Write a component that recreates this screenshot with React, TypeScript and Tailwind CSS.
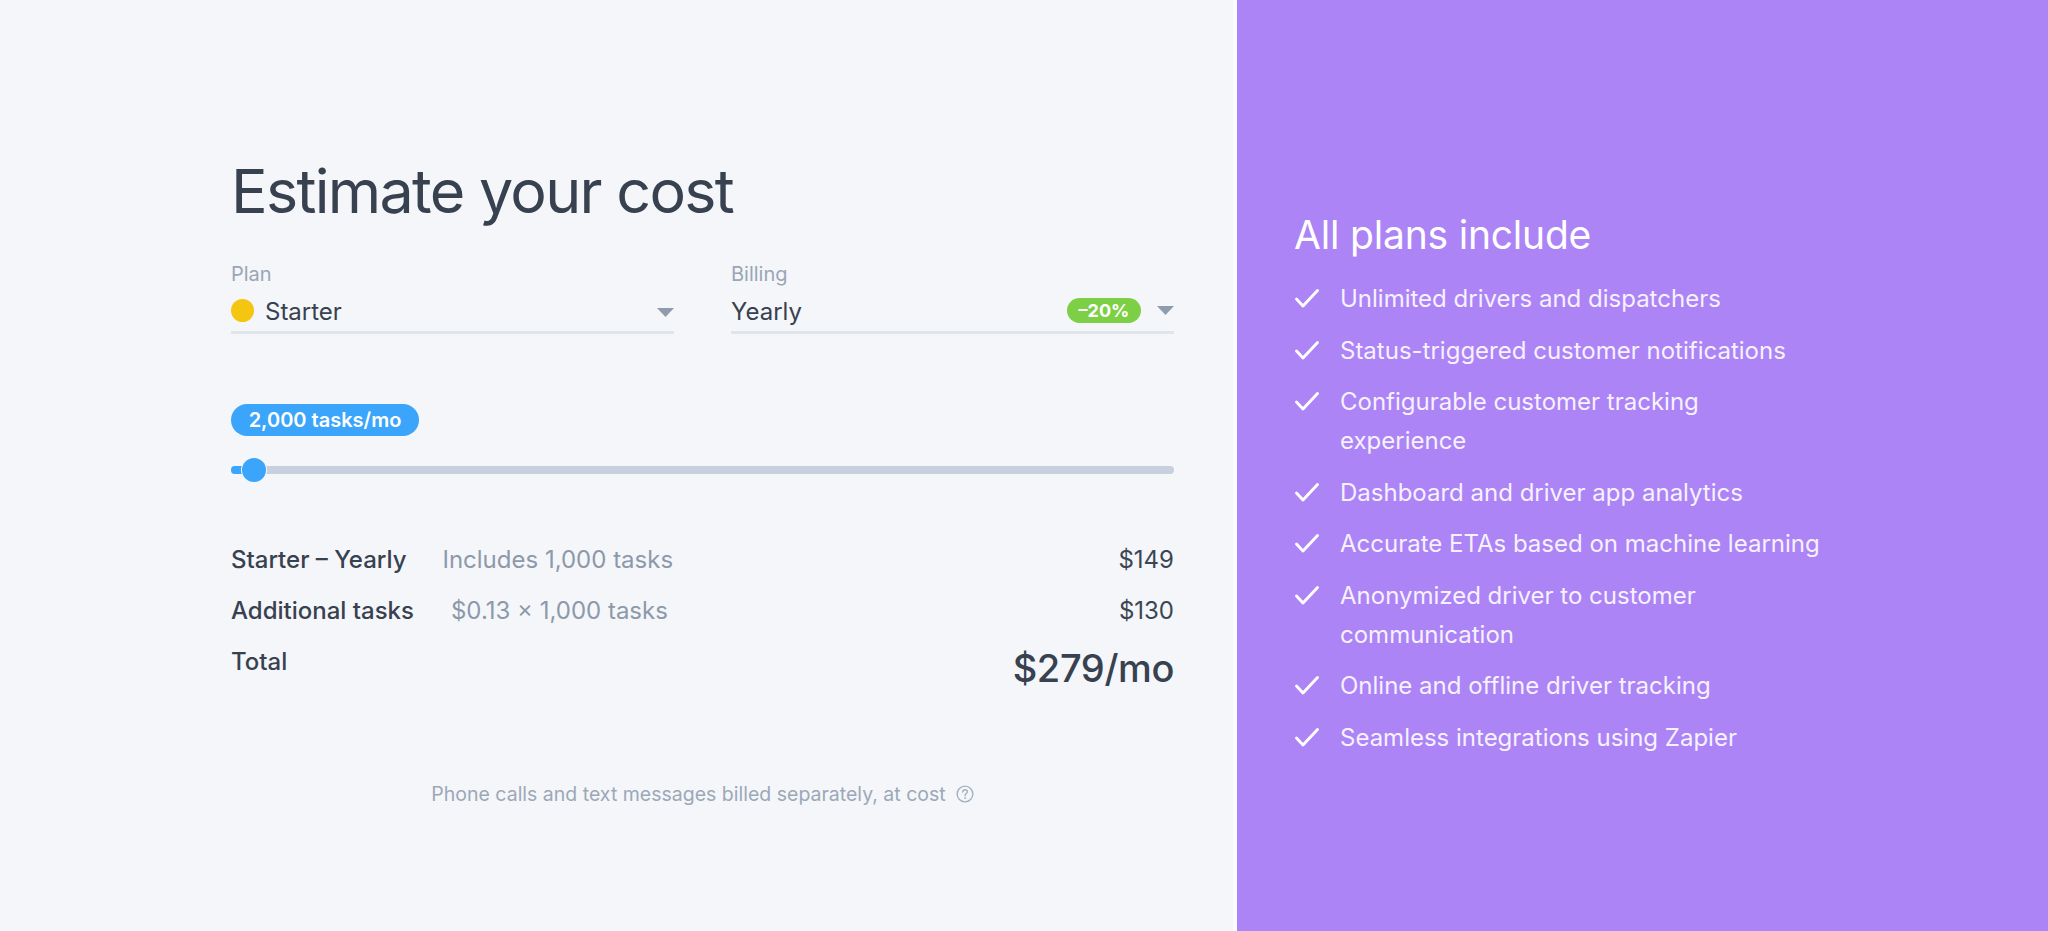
import React from "react";

const features: string[][] = [
  ["Unlimited drivers and dispatchers"],
  ["Status-triggered customer notifications"],
  ["Configurable customer tracking", "experience"],
  ["Dashboard and driver app analytics"],
  ["Accurate ETAs based on machine learning"],
  ["Anonymized driver to customer", "communication"],
  ["Online and offline driver tracking"],
  ["Seamless integrations using Zapier"],
];

function Caret() {
  return (
    <svg width="17" height="9" viewBox="0 0 17 9" className="shrink-0">
      <path d="M0 0 H17 L8.5 9 Z" fill="#8f9cae" />
    </svg>
  );
}

function Check() {
  return (
    <svg width="26" height="21" viewBox="0 0 26 21" className="shrink-0">
      <polyline
        points="2.5,11 9,18 23.5,2.5"
        fill="none"
        stroke="#ffffff"
        strokeWidth="2.9"
        strokeLinecap="round"
        strokeLinejoin="round"
      />
    </svg>
  );
}

function QuestionIcon() {
  return (
    <svg width="18" height="18" viewBox="0 0 16 16" className="shrink-0">
      <circle cx="8" cy="8" r="7" fill="none" stroke="#a3afbf" strokeWidth="1.2" />
      <path
        d="M5.9 6.2 C5.9 4.9 6.9 4.2 8 4.2 C9.2 4.2 10.1 5 10.1 6.1 C10.1 7.4 8.4 7.6 8.1 9 L8.1 9.6"
        fill="none"
        stroke="#a3afbf"
        strokeWidth="1.2"
        strokeLinecap="round"
      />
      <circle cx="8.1" cy="11.7" r="0.8" fill="#a3afbf" />
    </svg>
  );
}

export default function App() {
  return (
    <div
      className="flex h-[931px] w-[2048px] overflow-hidden"
      style={{ fontFamily: "Inter, 'Noto Sans', sans-serif" }}
    >
      {/* Left panel */}
      <div className="w-[1237px] shrink-0 bg-[#f4f6f9] border-r-[4px] border-[#fafbfc] pl-[231px] pt-[161px]">
        <div className="w-[943px] flex flex-col">
          <h1 className="text-[61px] leading-[60px] tracking-[-0.028em] font-normal text-[#37414f]">
            Estimate your cost
          </h1>

          <div className="mt-[41px] flex gap-[57px]">
            {/* Plan */}
            <div className="flex-1 flex flex-col">
              <div className="text-[20px] leading-[24px] text-[#9aa6b6]">Plan</div>
              <div className="mt-[10px] h-[32px] flex items-center">
                <span className="w-[23px] h-[23px] rounded-full bg-[#f5c60f] shrink-0 -mt-[4px]" />
                <span className="ml-[11px] text-[24px] text-[#37414f]">Starter</span>
                <span className="flex-1" />
                <Caret />
              </div>
              <div className="mt-[3px] h-[3px] bg-[#e0e5ec]" />
            </div>
            {/* Billing */}
            <div className="flex-1 flex flex-col">
              <div className="text-[20px] leading-[24px] text-[#9aa6b6]">Billing</div>
              <div className="mt-[10px] h-[32px] flex items-center">
                <span className="text-[24px] text-[#37414f]">Yearly</span>
                <span className="flex-1" />
                <span className="-mt-[3px] w-[74px] h-[25px] rounded-full bg-[#7dcf45] text-white text-[18px] font-bold flex items-center justify-center">
                  –20%
                </span>
                <span className="ml-[16px] -mt-[3px] flex">
                  <Caret />
                </span>
              </div>
              <div className="mt-[3px] h-[3px] bg-[#e0e5ec]" />
            </div>
          </div>

          {/* Slider */}
          <div className="mt-[70px] w-[188px] h-[32px] rounded-full bg-[#3ba4fb] text-white text-[20px] font-semibold flex items-center justify-center">
            2,000 tasks/mo
          </div>
          <div className="mt-[22px] relative h-[24px]">
            <div className="absolute left-0 right-0 top-[8px] h-[8px] rounded-full bg-[#c7d0dd]" />
            <div className="absolute left-0 w-[20px] top-[8px] h-[8px] rounded-full bg-[#3ba4fb]" />
            <div className="absolute left-[10px] top-0 w-[26px] h-[24px] rounded-full bg-[#f4f6f9]" />
            <div className="absolute left-[11px] top-0 w-[24px] h-[24px] rounded-full bg-[#3ba4fb]" />
          </div>

          {/* Breakdown */}
          <div className="mt-[62px] flex flex-col gap-[19px]">
            <div className="flex items-center justify-between h-[32px]">
              <div className="flex items-center">
                <span className="text-[24px] font-medium text-[#37414f]">Starter – Yearly</span>
                <span className="ml-[36px] text-[24px] text-[#8d99aa]">Includes 1,000 tasks</span>
              </div>
              <span className="text-[24px] text-[#3b4554]">$149</span>
            </div>
            <div className="flex items-center justify-between h-[32px]">
              <div className="flex items-center">
                <span className="text-[24px] font-medium text-[#37414f]">Additional tasks</span>
                <span className="ml-[37px] text-[24px] text-[#8d99aa]">$0.13 × 1,000 tasks</span>
              </div>
              <span className="text-[24px] text-[#3b4554]">$130</span>
            </div>
            <div className="flex items-start justify-between">
              <span className="text-[24px] leading-[32px] font-medium text-[#37414f]">Total</span>
              <span className="text-[38px] leading-[44px] font-medium text-[#37414f] tracking-[-0.01em]">
                $279/mo
              </span>
            </div>
          </div>

          <div className="mt-[92px] flex items-center justify-center gap-[10px]">
            <span className="text-[19.5px] leading-[24px] text-[#9ca8b8]">
              Phone calls and text messages billed separately, at cost
            </span>
            <QuestionIcon />
          </div>
        </div>
      </div>

      {/* Right panel */}
      <div className="flex-1 bg-[#ac84f5] pl-[57px] pt-[211px]">
        <h2 className="text-[39px] leading-[48px] tracking-[-0.005em] font-normal text-white">
          All plans include
        </h2>
        <ul className="mt-[20px] flex flex-col gap-[12.5px]">
          {features.map((lines, i) => (
            <li key={i} className="flex items-start">
              <span className="mt-[9px] flex">
                <Check />
              </span>
              <span className="ml-[20px] w-[490px] text-[24px] leading-[39px] text-[#f6f1ff]">
                {lines.map((l, j) => (
                  <span key={j} className="block">
                    {l}
                  </span>
                ))}
              </span>
            </li>
          ))}
        </ul>
      </div>
    </div>
  );
}
